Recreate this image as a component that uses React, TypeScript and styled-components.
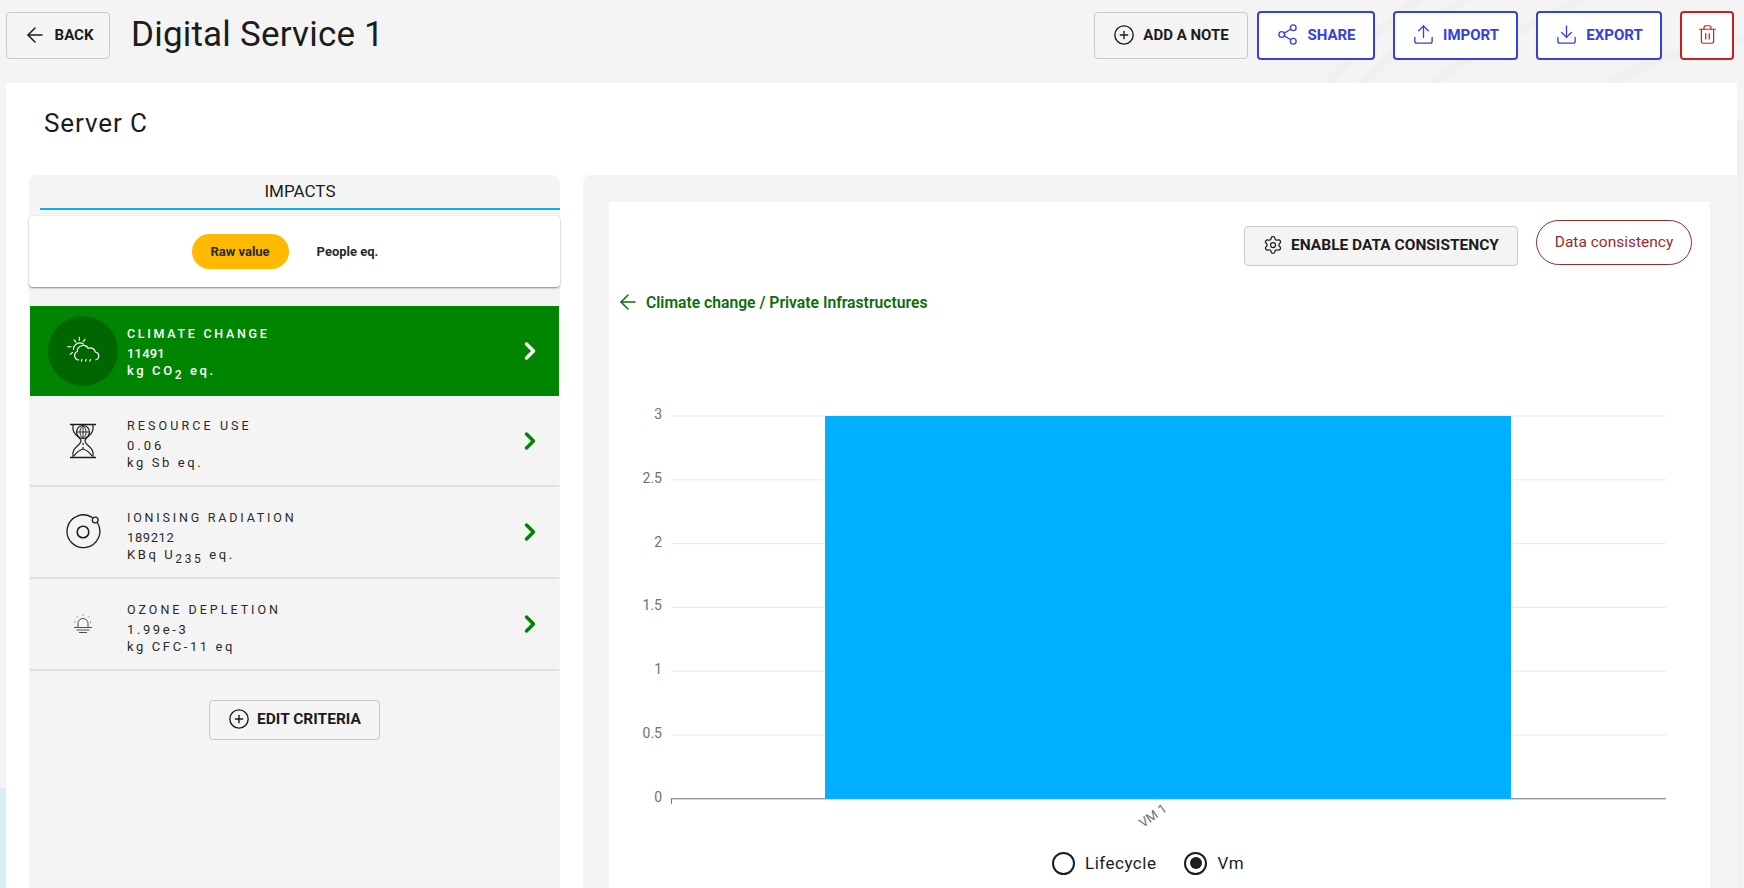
import React from 'react'
import styled, { createGlobalStyle } from 'styled-components'
import { ArrowLeft, ChevronRight, CirclePlus, Download, Settings, Share2, Trash2, Upload } from 'lucide-react'

const GlobalStyle = createGlobalStyle`
  html, body {
    margin: 0;
    padding: 0;
    height: 888px;
    overflow: hidden;
    background: #f4f4f4;
    font-family: 'Roboto', 'Liberation Sans', sans-serif;
    color: #1c1c1c;
  }
  * {
    box-sizing: border-box;
  }
`

const Page = styled.div`
  position: relative;
  width: 1744px;
  height: 888px;
  overflow: hidden;
`
const Backdrop = styled.svg`
  position: absolute;
  top: 0;
  left: 0;
  z-index: 0;
`
const Header = styled.header`
  position: relative;
  z-index: 1;
  display: flex;
  align-items: flex-start;
  height: 83px;
  padding: 12px 10px 0 6px;
`
const TitleText = styled.h1`
  margin: 1px 0 0 21px;
  font-size: 35px;
  font-weight: 400;
  line-height: 43px;
  letter-spacing: 0.2px;
`
const Actions = styled.div`
  display: flex;
  align-items: flex-start;
  margin-left: auto;
`
const Button = styled.button<{ $width: number; $gap?: number }>`
  display: flex;
  align-items: center;
  justify-content: center;
  gap: ${(p) => p.$gap ?? 8}px;
  width: ${(p) => p.$width}px;
  height: 47px;
  padding: 0 0 2px;
  font-family: inherit;
  font-size: 15px;
  font-weight: 700;
  color: #1c1c1c;
  background: #f4f4f4;
  border: 1px solid #c9c9c9;
  border-radius: 4px;
`
const OutlineButton = styled(Button)<{ $tone: string; $left: number }>`
  height: 49px;
  margin-top: -1px;
  margin-left: ${(p) => p.$left}px;
  color: ${(p) => p.$tone};
  background: #fff;
  border: 2px solid ${(p) => p.$tone};
`
const EditButton = styled(Button)`
  height: 40px;
  font-size: 15.5px;
`
const Main = styled.main`
  position: relative;
  z-index: 1;
  width: 1731px;
  height: 805px;
  margin-left: 6px;
  background: #fff;
`
const ServerTitle = styled.h2`
  height: 92px;
  margin: 0;
  padding: 25px 0 0 38px;
  font-size: 26px;
  font-weight: 400;
  line-height: 30px;
  letter-spacing: 0.9px;
`
const Columns = styled.div`
  display: flex;
  gap: 23px;
  height: 713px;
  padding-left: 23px;
`
const LeftPanel = styled.section`
  width: 531px;
  background: #f4f4f4;
  border-radius: 8px 8px 0 0;
`
const TabLabel = styled.div`
  height: 35px;
  margin-left: 11px;
  padding-top: 6px;
  font-size: 17px;
  line-height: 20px;
  text-align: center;
  border-bottom: 2px solid #00b0ff;
`
const ToggleCard = styled.div`
  display: flex;
  align-items: center;
  justify-content: center;
  gap: 27px;
  height: 71px;
  margin-top: 6px;
  padding-right: 18px;
  background: #fff;
  border-radius: 4px;
  box-shadow: 0 1px 2px rgba(0, 0, 0, 0.45);
`
const Chip = styled.div<{ $active?: boolean }>`
  display: flex;
  align-items: center;
  justify-content: center;
  width: ${(p) => (p.$active ? '97px' : '64px')};
  height: 35px;
  font-size: 13px;
  font-weight: 700;
  color: #2a2a2a;
  background: ${(p) => (p.$active ? '#ffb900' : 'transparent')};
  border-radius: 18px;
`
const RowList = styled.div`
  margin-top: 19px;
`
const Row = styled.div<{ $active?: boolean; $height: number }>`
  display: flex;
  align-items: center;
  height: ${(p) => p.$height}px;
  margin: 0 1px;
  padding-left: 18px;
  color: ${(p) => (p.$active ? '#fff' : '#2a2a2a')};
  background: ${(p) => (p.$active ? '#008500' : 'transparent')};
  border-bottom: ${(p) => (p.$active ? 'none' : '2px solid #e0e0e0')};
`
const IconDisc = styled.div<{ $active?: boolean }>`
  display: flex;
  flex-shrink: 0;
  align-items: center;
  justify-content: center;
  width: 70px;
  height: 70px;
  background: ${(p) => (p.$active ? '#006600' : 'transparent')};
  border-radius: 50%;
`
const RowText = styled.div<{ $active?: boolean }>`
  flex: 1;
  margin-left: 9px;
  padding-top: ${(p) => (p.$active ? 2 : 7)}px;
  font-size: 13px;
  font-weight: ${(p) => (p.$active ? 500 : 400)};
  line-height: 17px;
  letter-spacing: 2.6px;
  sub {
    font-size: 12px;
    line-height: 0;
  }
`
const RowName = styled.div<{ $spacing: number }>`
  margin-bottom: 3px;
  font-size: 12.5px;
  letter-spacing: ${(p) => p.$spacing}px;
`
const RowValue = styled.div<{ $spacing: number }>`
  letter-spacing: ${(p) => p.$spacing}px;
`
const RowChevron = styled.div<{ $active?: boolean }>`
  display: flex;
  margin-right: 15px;
  color: ${(p) => (p.$active ? '#fff' : '#008500')};
`
const EditRow = styled.div`
  display: flex;
  justify-content: center;
  padding-top: 29px;
`
const RightPanel = styled.section`
  width: 1154px;
  padding: 27px 27px 0 26px;
  background: #f4f4f4;
  border-radius: 8px 0 0 0;
`
const ChartCard = styled.div`
  height: 686px;
  background: #fff;
`
const ChartTop = styled.div`
  display: flex;
  align-items: flex-start;
  justify-content: flex-end;
  gap: 18px;
  height: 84px;
  padding: 18px 18px 0 0;
`
const ConsistencyButton = styled(Button)`
  height: 40px;
  margin-top: 6px;
  font-size: 15.5px;
`
const Pill = styled.div`
  display: flex;
  align-items: center;
  justify-content: center;
  width: 156px;
  height: 45px;
  padding-bottom: 2px;
  font-size: 15.5px;
  color: #992b2b;
  border: 1px solid #992b2b;
  border-radius: 23px;
`
const BackLink = styled.div`
  display: flex;
  align-items: center;
  gap: 6px;
  height: 32px;
  padding-left: 7px;
  font-size: 15.7px;
  font-weight: 600;
  color: #0a6e0a;
`
const ChartSvg = styled.svg`
  display: block;
  margin-top: 83px;
`
const Legend = styled.div`
  display: flex;
  align-items: center;
  height: 30px;
  margin-top: 5px;
  padding-left: 443px;
  font-size: 17px;
  letter-spacing: 0.5px;
`
const RadioMark = styled.span<{ $checked?: boolean; $left: number }>`
  display: flex;
  align-items: center;
  justify-content: center;
  width: 23px;
  height: 23px;
  margin-left: ${(p) => p.$left}px;
  margin-right: 10px;
  border: 2px solid #1c1c1c;
  border-radius: 50%;
  &::after {
    content: '';
    display: ${(p) => (p.$checked ? 'block' : 'none')};
    width: 12px;
    height: 12px;
    background: #1c1c1c;
    border-radius: 50%;
  }
`

const ClimateIcon = () => (
  <svg width="36" height="36" viewBox="0 0 34 34" fill="none" stroke="#fff" strokeWidth="1.1" strokeLinecap="round">
    <path d="M8.5 6.5 l1.8 2.2 M13.5 4 v2.8 M19 6 l-1.8 2.2 M2.5 13 h3.2 M5 20 l2.2-1.6" />
    <path d="M8 15.5 a6 6 0 0 1 9.5-5" />
    <path d="M13 25.5 a4.2 4.2 0 0 1-1.4-8 a5.6 5.6 0 0 1 10.4-3 a4.6 4.6 0 0 1 6.6 3.4 a3.8 3.8 0 0 1 .6 7.4" />
    <path d="M16 25 l-.5 1.5 M20 25 l-.5 1.5 M24 25 l-.5 1.5" />
  </svg>
)
const HourglassIcon = () => (
  <svg width="30" height="36" viewBox="0 0 30 36" fill="none" stroke="#1c1c1c" strokeWidth="1.2">
    <path d="M2 1.5 h26 M2 34.5 h26" strokeWidth="1.5" />
    <path d="M5 2 v4 c0 6 8 8 8 12 c0 4-8 6-8 12 v4 M25 2 v4 c0 6-8 8-8 12 c0 4 8 6 8 12 v4" />
    <circle cx="15" cy="9" r="6.5" />
    <path d="M8.5 9 h13 M15 2.5 v13 M15 2.5 c-4 3-4 10 0 13 M15 2.5 c4 3 4 10 0 13" strokeWidth="0.9" />
    <path d="M15 20 v2 M15 24 v2 M6 33 c2-3 6-6 9-7 c3 1 7 4 9 7" />
  </svg>
)
const RingIcon = () => (
  <svg width="36" height="36" viewBox="0 0 36 36" fill="none" stroke="#1c1c1c" strokeWidth="1.3">
    <path d="M27.5 3.6 A16.4 16.4 0 1 0 32.6 9" />
    <circle cx="18" cy="18" r="5.8" strokeWidth="1.6" />
    <circle cx="30.2" cy="6" r="2.9" />
  </svg>
)
const OzoneIcon = () => (
  <svg width="20" height="20" viewBox="0 0 20 20" fill="none" stroke="#3a3a3a" strokeWidth="0.9">
    <path d="M5 13 v-3.5 a5 5 0 0 1 10 0 V13" />
    <path d="M1 13.5 h18 M3.5 16 h13 M6 18.5 h8" />
    <path d="M10 0.5 v1.6 M4 2.5 l1 1.2 M16 2.5 l-1 1.2 M1.5 8 h1.4 M17 8 h1.4" strokeDasharray="1 1" />
  </svg>
)

const impacts = [
  { name: 'CLIMATE CHANGE', nameSpacing: 2.7, value: '11491', valueSpacing: 0.2, unit: <>kg CO<sub>2</sub> eq.</>, icon: <ClimateIcon />, height: 90, active: true },
  { name: 'RESOURCE USE', nameSpacing: 3.1, value: '0.06', valueSpacing: 3, unit: 'kg Sb eq.', icon: <HourglassIcon />, height: 91 },
  { name: 'IONISING RADIATION', nameSpacing: 2.8, value: '189212', valueSpacing: 0.6, unit: <>KBq U<sub>235</sub> eq.</>, icon: <RingIcon />, height: 92 },
  { name: 'OZONE DEPLETION', nameSpacing: 3, value: '1.99e-3', valueSpacing: 2.6, unit: 'kg CFC-11 eq', icon: <OzoneIcon />, height: 92 },
]

const ticks = ['3', '2.5', '2', '1.5', '1', '0.5', '0']
const plotTop = 15
const tickStep = 63.8

const App = () => {
  return (
    <Page>
      <GlobalStyle />
      <Backdrop width="1744" height="888" viewBox="0 0 1744 888">
        <g fill="none" stroke="#f0f0f0" strokeWidth="9">
          <path d="M1328 83 C1360 50 1390 20 1425 -5" />
          <path d="M1362 83 C1395 50 1430 20 1470 -5" />
          <path d="M1430 83 C1480 50 1530 25 1590 -5" />
          <path d="M1610 83 C1650 60 1700 45 1760 35" />
          <path d="M1740 120 V888" strokeWidth="7" />
        </g>
        <rect x="0" y="788" width="6" height="100" fill="#d9eef7" />
      </Backdrop>
      <Header>
        <Button $width={104}>
          <ArrowLeft size={24} strokeWidth={1.5} />
          BACK
        </Button>
        <TitleText>Digital Service 1</TitleText>
        <Actions>
          <Button $width={154}>
            <CirclePlus size={22} strokeWidth={1.5} />
            ADD A NOTE
          </Button>
          <OutlineButton $width={118} $tone="#3640e0" $left={9}>
            <Share2 size={23} strokeWidth={1.4} />
            SHARE
          </OutlineButton>
          <OutlineButton $width={125} $tone="#3640e0" $left={18}>
            <Upload size={23} strokeWidth={1.4} />
            IMPORT
          </OutlineButton>
          <OutlineButton $width={126} $tone="#3640e0" $left={18}>
            <Download size={23} strokeWidth={1.4} />
            EXPORT
          </OutlineButton>
          <OutlineButton $width={54} $tone="#cc2020" $left={18}>
            <Trash2 size={21} strokeWidth={1.4} />
          </OutlineButton>
        </Actions>
      </Header>
      <Main>
        <ServerTitle>Server C</ServerTitle>
        <Columns>
          <LeftPanel>
            <TabLabel>IMPACTS</TabLabel>
            <ToggleCard>
              <Chip $active>Raw value</Chip>
              <Chip>People eq.</Chip>
            </ToggleCard>
            <RowList>
              {impacts.map((item) => (
                <Row key={item.name} $active={item.active} $height={item.height}>
                  <IconDisc $active={item.active}>{item.icon}</IconDisc>
                  <RowText $active={item.active}>
                    <RowName $spacing={item.nameSpacing}>{item.name}</RowName>
                    <RowValue $spacing={item.valueSpacing}>{item.value}</RowValue>
                    <div>{item.unit}</div>
                  </RowText>
                  <RowChevron $active={item.active}>
                    <ChevronRight size={28} strokeWidth={3} />
                  </RowChevron>
                </Row>
              ))}
            </RowList>
            <EditRow>
              <EditButton $width={171} $gap={7}>
                <CirclePlus size={22} strokeWidth={1.5} />
                EDIT CRITERIA
              </EditButton>
            </EditRow>
          </LeftPanel>
          <RightPanel>
            <ChartCard>
              <ChartTop>
                <ConsistencyButton $width={274} $gap={8}>
                  <Settings size={20} strokeWidth={1.5} />
                  ENABLE DATA CONSISTENCY
                </ConsistencyButton>
                <Pill>Data consistency</Pill>
              </ChartTop>
              <BackLink>
                <ArrowLeft size={24} strokeWidth={1.5} />
                Climate change / Private Infrastructures
              </BackLink>
              <ChartSvg width="1101" height="442" viewBox="0 0 1101 442" fontFamily="Roboto, sans-serif">
                {ticks.map((tick, i) => (
                  <g key={tick}>
                    <line x1="62" x2="1057" y1={plotTop + i * tickStep} y2={plotTop + i * tickStep} stroke={i === 6 ? '#6e7079' : '#e6e9f0'} />
                    <text x="53" y={plotTop + i * tickStep + 3} textAnchor="end" fontSize="14" fill="#6e7079">
                      {tick}
                    </text>
                  </g>
                ))}
                <rect x="216" y={plotTop} width="686" height={tickStep * 6} fill="#00b0ff" />
                <line x1="62.5" x2="62.5" y1={plotTop + tickStep * 6} y2={plotTop + tickStep * 6 + 5} stroke="#6e7079" />
                <text x="544" y="419" textAnchor="middle" fontSize="13" fill="#6e7079" transform="rotate(-35 544 415)">
                  VM 1
                </text>
              </ChartSvg>
              <Legend>
                <RadioMark $left={0} />
                Lifecycle
                <RadioMark $left={28} $checked />
                Vm
              </Legend>
            </ChartCard>
          </RightPanel>
        </Columns>
      </Main>
    </Page>
  )
}

export default App
